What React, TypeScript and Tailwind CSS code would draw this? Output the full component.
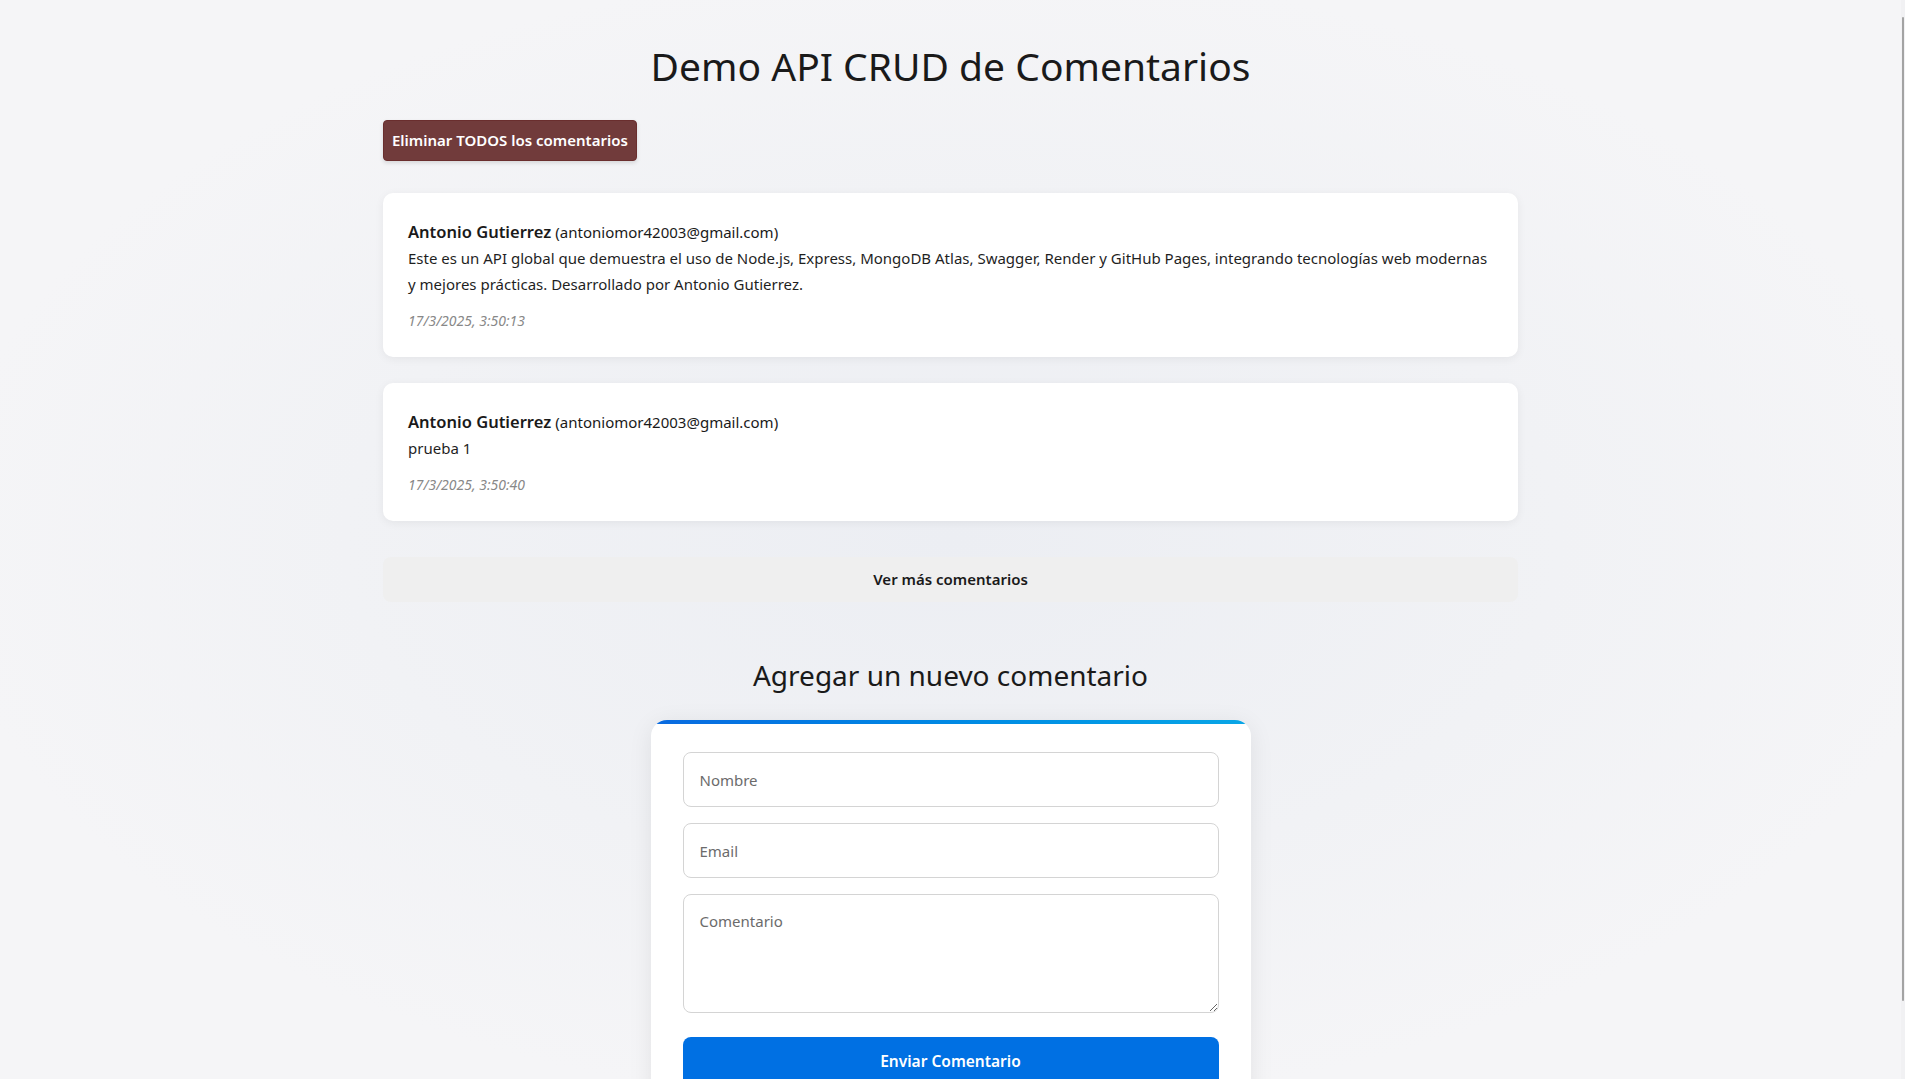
const comments = [
  {
    name: "Antonio Gutierrez",
    email: "antoniomor42003@gmail.com",
    lines: [
      "Este es un API global que demuestra el uso de Node.js, Express, MongoDB Atlas, Swagger, Render y GitHub Pages, integrando tecnologías web modernas",
      "y mejores prácticas. Desarrollado por Antonio Gutierrez.",
    ],
    date: "17/3/2025, 3:50:13",
  },
  {
    name: "Antonio Gutierrez",
    email: "antoniomor42003@gmail.com",
    lines: ["prueba 1"],
    date: "17/3/2025, 3:50:40",
  },
];

function CommentCard({ name, email, lines, date }: (typeof comments)[number]) {
  return (
    <div className="rounded-[10px] bg-white px-[25px] pt-[26px] pb-[25px] shadow-[0_2px_10px_rgba(0,0,0,0.06)]">
      <p className="leading-[26px] text-[#1a1a1a]">
        <strong className="text-[16.5px] font-semibold">{name}</strong>{" "}
        <span className="text-[15px]">({email})</span>
      </p>
      <div className="text-[15px] leading-[26px] text-[#1f1f1f]">
        {lines.map((line, i) => (
          <div key={i} className="whitespace-nowrap">
            {line}
          </div>
        ))}
      </div>
      <p className="mt-[13px] text-[14px] leading-[22px] italic text-[#888]">{date}</p>
    </div>
  );
}

export default function App() {
  return (
    <div
      className="flex h-[1079px] overflow-hidden bg-[radial-gradient(ellipse_at_center,#eceef3_0%,#f1f2f5_45%,#f5f5f7_75%)] text-[#1a1a1a]"
      style={{ fontFamily: '"Noto Sans", "Open Sans", sans-serif' }}
    >
      <main className="flex-1">
        <div className="mx-auto w-[1135px] pt-[38px]">
          <h1 className="text-center text-[39px] leading-[56px] font-normal text-[#1a1a1a]">
            Demo API CRUD de Comentarios
          </h1>

          <button className="mt-[26px] h-[41px] rounded-[4px] border border-[#6a2e2e] bg-[#713b3b] px-[8px] text-[15px] font-semibold text-white shadow-[0_2px_4px_rgba(0,0,0,0.12)]">
            Eliminar TODOS los comentarios
          </button>

          <div className="mt-[32px] flex flex-col gap-[26px]">
            {comments.map((c) => (
              <CommentCard key={c.date} {...c} />
            ))}
          </div>

          <button className="mt-[36px] h-[45px] w-full rounded-[8px] bg-[#efefef] text-[15px] font-semibold text-[#1a1a1a]">
            Ver más comentarios
          </button>

          <h2 className="mt-[55px] text-center text-[28px] leading-[36px] font-normal text-[#1a1a1a]">
            Agregar un nuevo comentario
          </h2>

          <form className="relative mx-auto mt-[27px] w-[600px] overflow-hidden rounded-[16px] bg-white px-[32px] pt-[32px] pb-[32px] shadow-[0_4px_24px_rgba(0,0,0,0.08)]">
            <div className="absolute top-0 right-0 left-0 h-[4px] bg-gradient-to-r from-[#0a6ae0] to-[#0aa6e6]" />
            <div className="flex flex-col gap-[16px]">
              <input
                placeholder="Nombre"
                className="h-[55px] rounded-[8px] border border-[#d4d4d4] px-[16px] text-[15px] placeholder:text-[#6b6b6b]"
              />
              <input
                placeholder="Email"
                className="h-[55px] rounded-[8px] border border-[#d4d4d4] px-[16px] text-[15px] placeholder:text-[#6b6b6b]"
              />
              <textarea
                placeholder="Comentario"
                className="h-[119px] rounded-[8px] border border-[#d4d4d4] px-[16px] py-[15px] text-[15px] placeholder:text-[#6b6b6b]"
              />
            </div>
            <button
              type="button"
              className="mt-[24px] h-[50px] w-full rounded-[8px] bg-[#0070e3] text-[15.5px] font-semibold text-white"
            >
              Enviar Comentario
            </button>
          </form>
        </div>
      </main>
      <div className="flex w-[4px] flex-col bg-[#f1f1f3] pt-[17px]">
        <div className="ml-[1px] h-[984px] w-[2px] rounded-full bg-[#a3a3a3]" />
      </div>
    </div>
  );
}
